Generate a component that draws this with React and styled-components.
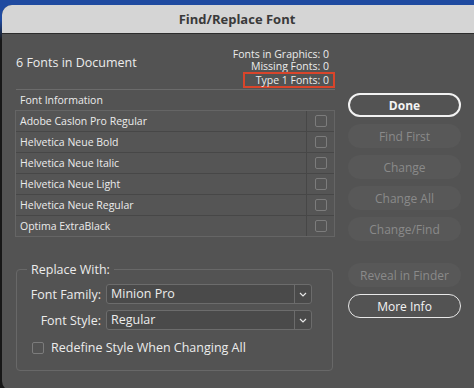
import React from 'react'
import styled, { createGlobalStyle } from 'styled-components'

const GlobalStyle = createGlobalStyle`
  html, body {
    margin: 0;
    padding: 0;
  }
  body {
    font-family: "Open Sans", "Liberation Sans", sans-serif;
    background: #111;
  }
`

const fonts = [
  'Adobe Caslon Pro Regular',
  'Helvetica Neue Bold',
  'Helvetica Neue Italic',
  'Helvetica Neue Light',
  'Helvetica Neue Regular',
  'Optima ExtraBlack',
]

const Chevron = () => (
  <svg width="8" height="5" viewBox="0 0 8 5">
    <path d="M1 1 L4 4 L7 1" fill="none" stroke="#e6e6e6" strokeWidth="1.2" />
  </svg>
)

const App = () => {
  return (
    <Page>
      <GlobalStyle />
      <Window>
        <TitleBar>Find/Replace Font</TitleBar>
        <Body>
          <LeftColumn>
            <Header>
              <DocCount>6 Fonts in Document</DocCount>
              <Stats>
                <StatLine>Fonts in Graphics: 0</StatLine>
                <StatLine>Missing Fonts: 0</StatLine>
                <Highlight>Type 1 Fonts: 0</Highlight>
              </Stats>
            </Header>
            <Separator />
            <TableLabel>Font Information</TableLabel>
            <Table>
              {fonts.map((name) => (
                <Row key={name}>
                  <NameCell>{name}</NameCell>
                  <CheckCell>
                    <Box />
                  </CheckCell>
                </Row>
              ))}
            </Table>
            <Group>
              <Legend>Replace With:</Legend>
              <Field>
                <FieldLabel>Font Family:</FieldLabel>
                <Select>
                  <SelectValue>Minion Pro</SelectValue>
                  <SelectArrow><Chevron /></SelectArrow>
                </Select>
              </Field>
              <Field>
                <FieldLabel>Font Style:</FieldLabel>
                <Select>
                  <SelectValue>Regular</SelectValue>
                  <SelectArrow><Chevron /></SelectArrow>
                </Select>
              </Field>
              <CheckRow>
                <Box />
                <span>Redefine Style When Changing All</span>
              </CheckRow>
            </Group>
          </LeftColumn>
          <RightColumn>
            <Button primary>Done</Button>
            <Button disabled>Find First</Button>
            <Button disabled>Change</Button>
            <Button disabled>Change All</Button>
            <Button disabled>Change/Find</Button>
            <Button disabled spaced>Reveal in Finder</Button>
            <Button outline>More Info</Button>
          </RightColumn>
        </Body>
      </Window>
    </Page>
  )
}

export default App

const Page = styled.div`
  width: 474px;
  height: 388px;
  overflow: hidden;
  padding: 5px 0 0 2px;
  box-sizing: border-box;
  background: linear-gradient(180deg, #1f4aa0 0px, #1f4aa0 20px, #171717 40px);
`

const Window = styled.div`
  width: 490px;
  height: 386px;
  border-radius: 10px;
  overflow: hidden;
  background: #535353;
  color: #ececec;
`

const TitleBar = styled.div`
  height: 28px;
  line-height: 28px;
  background: #d5d5d5;
  border-bottom: 1px solid #2c2c2c;
  color: #3a3a3a;
  font-size: 13px;
  font-weight: 700;
  text-align: center;
  padding-right: 20px;
`

const Body = styled.div`
  display: grid;
  grid-template-columns: 320px 113px;
  column-gap: 13px;
  padding: 13px 0 0 13px;
`

const LeftColumn = styled.div`
  display: flex;
  flex-direction: column;
`

const Header = styled.div`
  display: flex;
  justify-content: space-between;
  align-items: flex-start;
  height: 42px;
`

const DocCount = styled.div`
  font-size: 12.5px;
  line-height: 16px;
  padding-left: 1px;
  margin-top: 8px;
`

const Stats = styled.div`
  display: flex;
  flex-direction: column;
  align-items: flex-end;
  font-size: 10.5px;
  line-height: 12px;
  margin-top: 1px;
`

const StatLine = styled.div`
  padding-right: 6px;
`

const Highlight = styled.div`
  border: 2px solid #d9452b;
  padding: 0 4px 0 11px;
  line-height: 12px;
`

const Separator = styled.div`
  height: 1px;
  background: #6b6b6b;
  margin: 0 0 0 1px;
`

const TableLabel = styled.div`
  font-size: 10.5px;
  line-height: 20px;
  padding-left: 5px;
`

const Table = styled.div`
  width: 318px;
  border: 1px solid #656565;
  background: #555555;
`

const Row = styled.div`
  display: flex;
  height: 20px;
  border-bottom: 1px solid #474747;
  &:last-child {
    border-bottom: none;
  }
`

const NameCell = styled.div`
  flex: 1;
  font-size: 10.5px;
  line-height: 20px;
  padding-left: 4px;
  border-right: 1px solid #474747;
`

const CheckCell = styled.div`
  width: 27px;
  display: flex;
  align-items: center;
  justify-content: center;
`

const Box = styled.span`
  width: 10px;
  height: 10px;
  border: 1px solid #7c7c7c;
  border-radius: 2px;
  flex-shrink: 0;
`

const Group = styled.div`
  position: relative;
  margin: 32px 0 0 1px;
  width: 317px;
  height: 102px;
  border: 1px solid #686868;
  border-radius: 4px;
  padding: 14px 0 0 0;
  box-sizing: border-box;
  display: flex;
  flex-direction: column;
  gap: 6px;
`

const Legend = styled.div`
  position: absolute;
  top: -9px;
  left: 10px;
  padding: 0 4px;
  background: #535353;
  font-size: 12.5px;
  line-height: 17px;
`

const Field = styled.div`
  display: grid;
  grid-template-columns: 84px 206px;
  column-gap: 5px;
  align-items: center;
`

const FieldLabel = styled.div`
  text-align: right;
  font-size: 12.5px;
  white-space: nowrap;
`

const Select = styled.div`
  display: flex;
  height: 20px;
  box-sizing: border-box;
  border: 1px solid #6c6c6c;
  border-radius: 3px;
  background: #4a4a4a;
`

const SelectValue = styled.div`
  flex: 1;
  font-size: 12.5px;
  line-height: 18px;
  padding-left: 4px;
  border-right: 1px solid #6c6c6c;
`

const SelectArrow = styled.div`
  width: 16px;
  display: flex;
  align-items: center;
  justify-content: center;
`

const CheckRow = styled.div`
  display: flex;
  align-items: center;
  gap: 7px;
  padding-left: 15px;
  margin-top: 3px;
  font-size: 12.5px;
`

const RightColumn = styled.div`
  display: flex;
  flex-direction: column;
  gap: 7px;
  padding-top: 46px;
`

const Button = styled.div`
  height: 24px;
  box-sizing: border-box;
  border-radius: 12px;
  display: flex;
  align-items: center;
  justify-content: center;
  font-size: 12px;
  margin-top: ${(p) => (p.spaced ? '15px' : '0')};
  color: ${(p) => (p.disabled ? '#8a8a8a' : '#f4f4f4')};
  background: ${(p) => (p.disabled ? '#585858' : 'transparent')};
  border: ${(p) =>
    p.primary ? '2px solid #f2f2f2' : p.outline ? '1.5px solid #e8e8e8' : 'none'};
  font-weight: ${(p) => (p.primary ? 700 : 500)};
`
